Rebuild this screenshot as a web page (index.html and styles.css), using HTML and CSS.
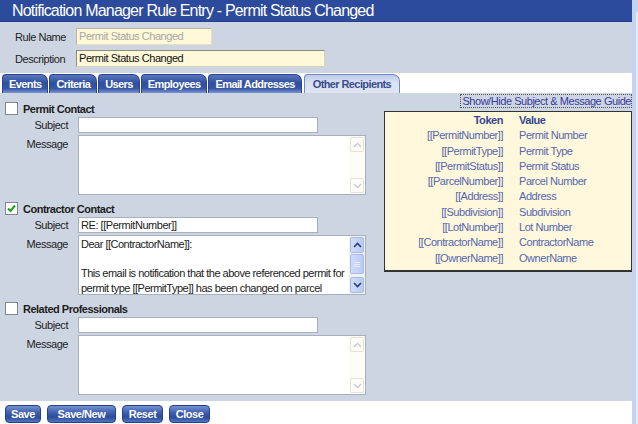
FILE: index.html
```html
<!DOCTYPE html>
<html>
<head>
<meta charset="utf-8">
<link rel="stylesheet" href="styles.css">
</head>
<body>
<div class="frame">
  <div class="page">
    <div class="title">Notification Manager Rule Entry - Permit Status Changed</div>
    <div class="header">
      <div class="hrow"><span class="hlabel">Rule Name</span><div class="hinput short disabled">Permit Status Changed</div></div>
      <div class="hrow"><span class="hlabel">Description</span><div class="hinput long">Permit Status Changed</div></div>
    </div>
    <div class="tabs">
      <div class="tab">Events</div>
      <div class="tab">Criteria</div>
      <div class="tab">Users</div>
      <div class="tab">Employees</div>
      <div class="tab">Email Addresses</div>
      <div class="tab active">Other Recipients</div>
    </div>
    <div class="panel">
      <div class="left">
        <div class="section">
          <div class="shead"><span class="cb"></span><span class="stitle">Permit Contact</span></div>
          <div class="frow"><span class="flabel">Subject</span><div class="subject"></div></div>
          <div class="frow"><span class="flabel msg">Message</span>
            <div class="textarea"><div class="tcontent"></div>
              <div class="sbar off"><div class="sbtn up"><svg width="9" height="6" viewBox="0 0 9 6"><path d="M1 5 L4.5 1.5 L8 5" fill="none" stroke="#c9cdd3" stroke-width="1.5"/></svg></div><div class="strack"></div><div class="sbtn down"><svg width="9" height="6" viewBox="0 0 9 6"><path d="M1 1 L4.5 4.5 L8 1" fill="none" stroke="#c9cdd3" stroke-width="1.5"/></svg></div></div>
            </div>
          </div>
        </div>
        <div class="section">
          <div class="shead"><span class="cb"><svg width="11" height="11" viewBox="0 0 11 11"><path d="M2 5.5 L4.5 8 L9 2.5" fill="none" stroke="#21a121" stroke-width="2"/></svg></span><span class="stitle">Contractor Contact</span></div>
          <div class="frow"><span class="flabel">Subject</span><div class="subject">RE: [[PermitNumber]]</div></div>
          <div class="frow"><span class="flabel msg">Message</span>
            <div class="textarea"><div class="tcontent">Dear [[ContractorName]]:<br><br>This email is notification that the above referenced permit for permit type [[PermitType]] has been changed on parcel [[ParcelNumber]], for address [[Address]] owned by [[OwnerName]].</div>
              <div class="sbar on"><div class="sbtn up"><svg width="9" height="6" viewBox="0 0 9 6"><path d="M1 5 L4.5 1.5 L8 5" fill="none" stroke="#2a3f7a" stroke-width="1.6"/></svg></div><div class="strack"><div class="thumb"><i></i><i></i><i></i></div></div><div class="sbtn down"><svg width="9" height="6" viewBox="0 0 9 6"><path d="M1 1 L4.5 4.5 L8 1" fill="none" stroke="#2a3f7a" stroke-width="1.6"/></svg></div></div>
            </div>
          </div>
        </div>
        <div class="section">
          <div class="shead"><span class="cb"></span><span class="stitle">Related Professionals</span></div>
          <div class="frow"><span class="flabel">Subject</span><div class="subject"></div></div>
          <div class="frow"><span class="flabel msg">Message</span>
            <div class="textarea"><div class="tcontent"></div>
              <div class="sbar off"><div class="sbtn up"><svg width="9" height="6" viewBox="0 0 9 6"><path d="M1 5 L4.5 1.5 L8 5" fill="none" stroke="#c9cdd3" stroke-width="1.5"/></svg></div><div class="strack"></div><div class="sbtn down"><svg width="9" height="6" viewBox="0 0 9 6"><path d="M1 1 L4.5 4.5 L8 1" fill="none" stroke="#c9cdd3" stroke-width="1.5"/></svg></div></div>
            </div>
          </div>
        </div>
      </div>
      <div class="right">
        <div class="linkrow"><span class="guide">Show/Hide Subject &amp; Message Guide</span></div>
        <div class="tokens">
          <div class="trow th"><span class="tk">Token</span><span class="tv">Value</span></div>
          <div class="trow"><span class="tk">[[PermitNumber]]</span><span class="tv">Permit Number</span></div>
          <div class="trow"><span class="tk">[[PermitType]]</span><span class="tv">Permit Type</span></div>
          <div class="trow"><span class="tk">[[PermitStatus]]</span><span class="tv">Permit Status</span></div>
          <div class="trow"><span class="tk">[[ParcelNumber]]</span><span class="tv">Parcel Number</span></div>
          <div class="trow"><span class="tk">[[Address]]</span><span class="tv">Address</span></div>
          <div class="trow"><span class="tk">[[Subdivision]]</span><span class="tv">Subdivision</span></div>
          <div class="trow"><span class="tk">[[LotNumber]]</span><span class="tv">Lot Number</span></div>
          <div class="trow"><span class="tk">[[ContractorName]]</span><span class="tv">ContractorName</span></div>
          <div class="trow"><span class="tk">[[OwnerName]]</span><span class="tv">OwnerName</span></div>
        </div>
      </div>
    </div>
    <div class="buttons">
      <div class="btn w-save">Save</div>
      <div class="btn w-savenew">Save/New</div>
      <div class="btn w-reset">Reset</div>
      <div class="btn w-close">Close</div>
    </div>
  </div>
  <div class="rstrip"><div class="rline"></div></div>
</div>
</body>
</html>
```
FILE: styles.css
```css
* { box-sizing: border-box; }
html, body { margin: 0; padding: 0; background: #fff; }
body { font-family: "Liberation Sans", Arial, sans-serif; font-size: 11px; letter-spacing: -0.45px; color: #222; }
.frame { display: flex; width: 638px; height: 424px; overflow: hidden; }
.page { width: 632px; flex: none; }
.rstrip { width: 6px; flex: none; background: #c5d3f2; display: flex; justify-content: flex-end; padding-top: 12px; }
.rline { width: 2px; background: #e4ebfa; height: 100%; }

.title { height: 22px; background: #2d4b9c; color: #fff; font-size: 16px; letter-spacing: -0.8px; line-height: 22px; padding-left: 12px; border-bottom: 1px solid #24408a; }

.header { background: #cdd5e2; padding: 6px 0 5px 0; height: 51px; }
.hrow { display: flex; align-items: center; height: 17px; margin-bottom: 5px; }
.hlabel { width: 76px; padding-left: 15px; color: #222; }
.hinput { height: 17px; background: #fff8d9; border: 1px solid #d8d2b8; border-top-color: #8c8c80; border-left-color: #8c8c80; line-height: 15px; padding-left: 2px; color: #111; }
.hinput.disabled { color: #a8a8a0; border-color: #e6dfc0; border-top-color: #b9b6a8; border-left-color: #b9b6a8; }
.short { width: 136px; }
.long { width: 249px; }

.tabs { display: flex; align-items: flex-end; height: 20px; background: #fff; padding-left: 2px; gap: 1px; }
.tab { height: 19px; padding: 0 6px; line-height: 18px; color: #fff; font-weight: bold; letter-spacing: -0.6px; border-radius: 4px 7px 0 0; background: linear-gradient(#5a77bd, #2f4f9f 45%, #3757a6 75%, #7a94cf); border: 1px solid #2a4690; border-bottom: none; }
.tab.active { background: linear-gradient(#bccbe8, #d9e1f0 40%, #dfe6f2); color: #384d8e; border-color: #6f87c4; padding: 0 8px; margin-left: 1px; }

.panel { background: #cdd5e2; height: 308px; display: flex; }
.left { width: 380px; padding-top: 8px; }
.section { margin-bottom: 6px; }
.section + .section + .section { margin-top: 1px; }
.shead { display: flex; align-items: center; height: 15px; margin-bottom: 1px; }
.cb { width: 13px; height: 13px; margin-left: 5px; background: #fff; border: 1px solid #7d8797; display: flex; align-items: center; justify-content: center; flex: none; }
.stitle { font-weight: bold; margin-left: 5px; color: #1d1d1d; letter-spacing: -0.5px; }
.frow { display: flex; align-items: flex-start; margin-bottom: 2px; }
.flabel { width: 68px; text-align: right; margin-right: 10px; line-height: 16px; color: #222; flex: none; }
.flabel.msg { padding-top: 1px; }
.subject { width: 240px; height: 16px; background: #fff; border: 1px solid #a7b0bf; line-height: 14px; padding-left: 2px; }
.textarea { width: 288px; height: 60px; background: #fff; border: 1px solid #a7b0bf; display: flex; overflow: hidden; }
.tcontent { flex: 1; padding: 1px 0 0 2px; line-height: 14.5px; letter-spacing: -0.5px; overflow: hidden; }
.sbar { width: 16px; display: flex; flex-direction: column; flex: none; }
.sbtn { height: 16px; display: flex; align-items: center; justify-content: center; }
.strack { flex: 1; }
.sbar.off { background: #fdfcf6; }
.sbar.off .sbtn { border: 1px solid #e3e3da; border-radius: 2px; margin: 1px; height: 15px; }
.sbar.on { background: #f2f1ea; }
.sbar.on .sbtn { background: linear-gradient(90deg, #cfdcfa, #b8cbf6); border: 1px solid #a8bbe8; border-radius: 2px; margin: 0 1px; }
.sbar.on .sbtn.up { margin-top: 1px; }
.sbar.on .sbtn.down { margin-bottom: 1px; }
.thumb { margin: 1px 1px 0 1px; height: 20px; background: linear-gradient(90deg, #cfdcfa, #b8cbf6); border: 1px solid #a8bbe8; border-radius: 2px; display: flex; flex-direction: column; align-items: center; justify-content: center; gap: 1px; }
.thumb i { display: block; width: 6px; height: 1px; background: #e8eefc; }

.right { flex: 1; display: flex; flex-direction: column; align-items: flex-end; }
.linkrow { margin-top: 1px; height: 14px; }
.guide { display: inline-block; border: 1px dotted #555; color: #3a3a9e; line-height: 12px; padding: 0 0 0 1px; height: 14px; }
.tokens { width: 248px; margin-top: 3px; background: #fff8dc; border: 1px solid #333; border-bottom-width: 2px; padding: 1px 0 4px 0; }
.trow { display: flex; height: 15.3px; line-height: 15px; color: #5467b0; }
.trow.th { font-weight: bold; color: #34488f; }
.tk { width: 118px; text-align: right; }
.tv { margin-left: 16px; }

.buttons { display: flex; gap: 6px; padding: 4px 0 0 5px; }
.btn { height: 18px; border-radius: 4px; color: #fff; font-weight: bold; text-align: center; line-height: 16px; border: 1px solid #23408a; background: linear-gradient(#7390cf, #3c5cab 45%, #2c4c9c 70%, #5674bd); }
.w-save { width: 36px; }
.w-savenew { width: 69px; }
.w-reset { width: 41px; }
.w-close { width: 41px; }
```
